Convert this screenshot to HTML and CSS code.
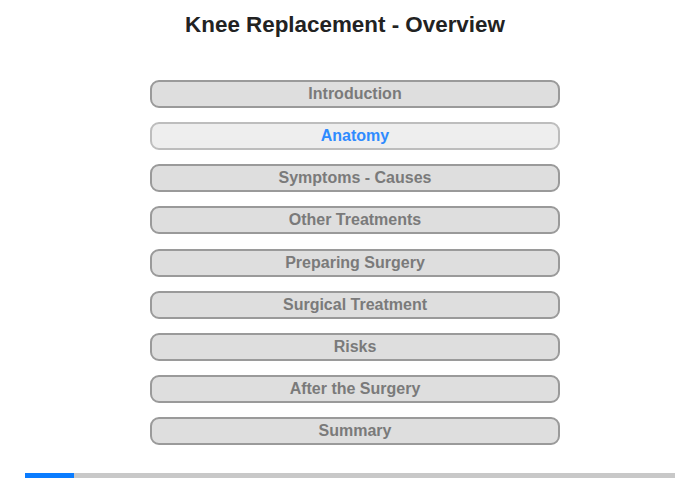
FILE: index.html
```html
<!DOCTYPE html>
<html>
<head>
<meta charset="utf-8">
<link rel="stylesheet" href="styles.css">
</head>
<body>
<div class="page">
  <h1 class="title">Knee Replacement - Overview</h1>
  <nav class="menu">
    <div class="item">Introduction</div>
    <div class="item active">Anatomy</div>
    <div class="item">Symptoms - Causes</div>
    <div class="item">Other Treatments</div>
    <div class="item">Preparing Surgery</div>
    <div class="item">Surgical Treatment</div>
    <div class="item">Risks</div>
    <div class="item">After the Surgery</div>
    <div class="item">Summary</div>
  </nav>
  <div class="progress"><div class="progress-fill"></div></div>
</div>
</body>
</html>
```
FILE: styles.css
```css
html, body {
  margin: 0;
  padding: 0;
  background: #fff;
}
.page {
  width: 700px;
  height: 480px;
  display: flex;
  flex-direction: column;
  font-family: "Liberation Sans", Arial, sans-serif;
}
.title {
  margin: 0;
  padding: 12px 10px 0 0;
  font-size: 22.4px;
  line-height: 25px;
  font-weight: bold;
  color: #222;
  text-align: center;
}
.menu {
  margin: 43px 0 0 150px;
  width: 410px;
  display: flex;
  flex-direction: column;
  gap: 14.15px;
}
.item {
  box-sizing: border-box;
  height: 28px;
  border: 2px solid #9a9a9a;
  border-radius: 9px;
  background: #dedede;
  color: #7a7a7a;
  font-size: 16px;
  font-weight: bold;
  line-height: 24px;
  text-align: center;
}
.item.active {
  background: #eeeeee;
  border-color: #bdbdbd;
  color: #2e8bff;
}
.progress {
  margin: 28px 0 0 25px;
  width: 650px;
  height: 5px;
  background: #c8c8c8;
}
.progress-fill {
  width: 49px;
  height: 100%;
  background: #0a7cff;
}
```
